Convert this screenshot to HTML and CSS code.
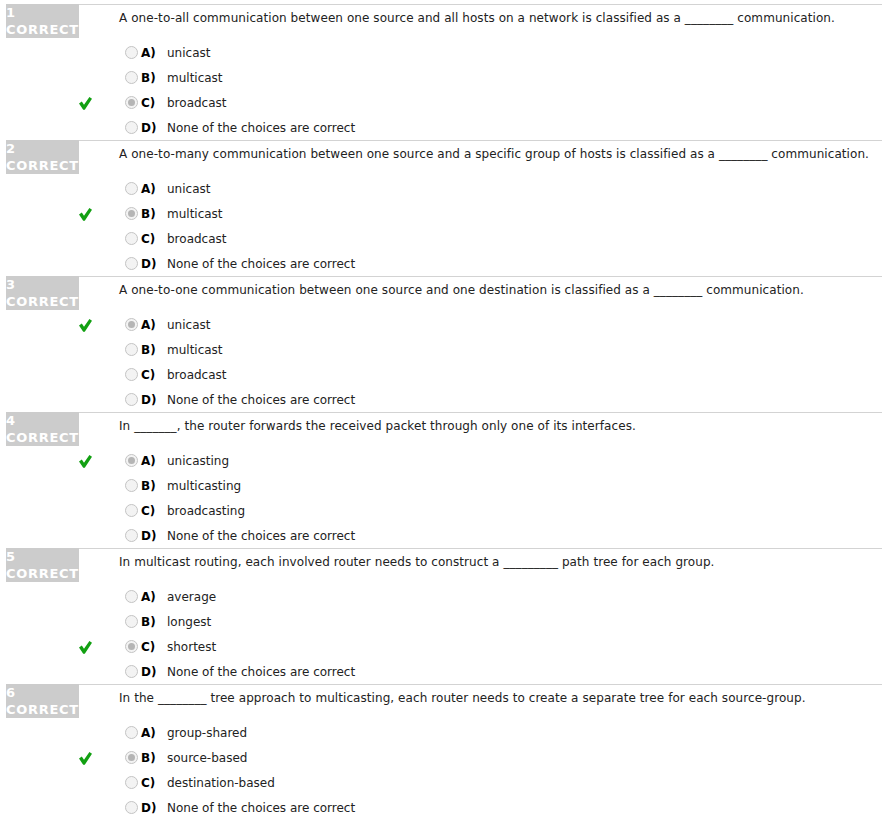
FILE: index.html
```html
<!DOCTYPE html>
<html>
<head>
<meta charset="utf-8">
<link rel="stylesheet" href="styles.css">
</head>
<body>
<div class="quiz">
  <div class="q">
    <div class="label">1<br>CORRECT</div>
    <div class="body">
      <div class="text">A one-to-all communication between one source and all hosts on a network is classified as a ________ communication.</div>
      <div class="opts">
        <div class="opt"><span class="mark"></span><span class="radio"></span><span class="let">A)</span><span class="ans">unicast</span></div>
        <div class="opt"><span class="mark"></span><span class="radio"></span><span class="let">B)</span><span class="ans">multicast</span></div>
        <div class="opt"><span class="mark"><svg viewBox="0 0 13 13" class="check"><path d="M0 6.6 L2.8 4.6 L5 7.8 L10.4 0 L13 1.8 L5.8 12.8 L4.2 12.8 Z"/></svg></span><span class="radio on"></span><span class="let">C)</span><span class="ans">broadcast</span></div>
        <div class="opt"><span class="mark"></span><span class="radio"></span><span class="let">D)</span><span class="ans">None of the choices are correct</span></div>
      </div>
    </div>
  </div>
  <div class="q">
    <div class="label">2<br>CORRECT</div>
    <div class="body">
      <div class="text">A one-to-many communication between one source and a specific group of hosts is classified as a ________ communication.</div>
      <div class="opts">
        <div class="opt"><span class="mark"></span><span class="radio"></span><span class="let">A)</span><span class="ans">unicast</span></div>
        <div class="opt"><span class="mark"><svg viewBox="0 0 13 13" class="check"><path d="M0 6.6 L2.8 4.6 L5 7.8 L10.4 0 L13 1.8 L5.8 12.8 L4.2 12.8 Z"/></svg></span><span class="radio on"></span><span class="let">B)</span><span class="ans">multicast</span></div>
        <div class="opt"><span class="mark"></span><span class="radio"></span><span class="let">C)</span><span class="ans">broadcast</span></div>
        <div class="opt"><span class="mark"></span><span class="radio"></span><span class="let">D)</span><span class="ans">None of the choices are correct</span></div>
      </div>
    </div>
  </div>
  <div class="q">
    <div class="label">3<br>CORRECT</div>
    <div class="body">
      <div class="text">A one-to-one communication between one source and one destination is classified as a ________ communication.</div>
      <div class="opts">
        <div class="opt"><span class="mark"><svg viewBox="0 0 13 13" class="check"><path d="M0 6.6 L2.8 4.6 L5 7.8 L10.4 0 L13 1.8 L5.8 12.8 L4.2 12.8 Z"/></svg></span><span class="radio on"></span><span class="let">A)</span><span class="ans">unicast</span></div>
        <div class="opt"><span class="mark"></span><span class="radio"></span><span class="let">B)</span><span class="ans">multicast</span></div>
        <div class="opt"><span class="mark"></span><span class="radio"></span><span class="let">C)</span><span class="ans">broadcast</span></div>
        <div class="opt"><span class="mark"></span><span class="radio"></span><span class="let">D)</span><span class="ans">None of the choices are correct</span></div>
      </div>
    </div>
  </div>
  <div class="q">
    <div class="label">4<br>CORRECT</div>
    <div class="body">
      <div class="text">In _______, the router forwards the received packet through only one of its interfaces.</div>
      <div class="opts">
        <div class="opt"><span class="mark"><svg viewBox="0 0 13 13" class="check"><path d="M0 6.6 L2.8 4.6 L5 7.8 L10.4 0 L13 1.8 L5.8 12.8 L4.2 12.8 Z"/></svg></span><span class="radio on"></span><span class="let">A)</span><span class="ans">unicasting</span></div>
        <div class="opt"><span class="mark"></span><span class="radio"></span><span class="let">B)</span><span class="ans">multicasting</span></div>
        <div class="opt"><span class="mark"></span><span class="radio"></span><span class="let">C)</span><span class="ans">broadcasting</span></div>
        <div class="opt"><span class="mark"></span><span class="radio"></span><span class="let">D)</span><span class="ans">None of the choices are correct</span></div>
      </div>
    </div>
  </div>
  <div class="q">
    <div class="label">5<br>CORRECT</div>
    <div class="body">
      <div class="text">In multicast routing, each involved router needs to construct a _________ path tree for each group.</div>
      <div class="opts">
        <div class="opt"><span class="mark"></span><span class="radio"></span><span class="let">A)</span><span class="ans">average</span></div>
        <div class="opt"><span class="mark"></span><span class="radio"></span><span class="let">B)</span><span class="ans">longest</span></div>
        <div class="opt"><span class="mark"><svg viewBox="0 0 13 13" class="check"><path d="M0 6.6 L2.8 4.6 L5 7.8 L10.4 0 L13 1.8 L5.8 12.8 L4.2 12.8 Z"/></svg></span><span class="radio on"></span><span class="let">C)</span><span class="ans">shortest</span></div>
        <div class="opt"><span class="mark"></span><span class="radio"></span><span class="let">D)</span><span class="ans">None of the choices are correct</span></div>
      </div>
    </div>
  </div>
  <div class="q">
    <div class="label">6<br>CORRECT</div>
    <div class="body">
      <div class="text">In the ________ tree approach to multicasting, each router needs to create a separate tree for each source-group.</div>
      <div class="opts">
        <div class="opt"><span class="mark"></span><span class="radio"></span><span class="let">A)</span><span class="ans">group-shared</span></div>
        <div class="opt"><span class="mark"><svg viewBox="0 0 13 13" class="check"><path d="M0 6.6 L2.8 4.6 L5 7.8 L10.4 0 L13 1.8 L5.8 12.8 L4.2 12.8 Z"/></svg></span><span class="radio on"></span><span class="let">B)</span><span class="ans">source-based</span></div>
        <div class="opt"><span class="mark"></span><span class="radio"></span><span class="let">C)</span><span class="ans">destination-based</span></div>
        <div class="opt"><span class="mark"></span><span class="radio"></span><span class="let">D)</span><span class="ans">None of the choices are correct</span></div>
      </div>
    </div>
  </div>
</div>
</body>
</html>
```

FILE: styles.css
```css
html, body {
  margin: 0;
  padding: 0;
  background: #fff;
}
body {
  font-family: "DejaVu Sans", Verdana, sans-serif;
  font-size: 12px;
  color: #222;
}
.quiz {
  padding: 4px 0 0 6px;
}
.q {
  display: flex;
  height: 136px;
}
.label {
  width: 73px;
  height: 34px;
  flex: none;
  background: #cccccc;
  color: #fff;
  font-weight: bold;
  font-size: 13px;
  line-height: 17px;
  padding-left: 0;
  box-sizing: border-box;
  letter-spacing: 0.7px;
  overflow: hidden;
  white-space: nowrap;
}
.body {
  flex: 1;
  border-top: 1px solid #d3d3d3;
}
.text {
  padding: 5px 0 0 40px;
  line-height: 16px;
  white-space: nowrap;
  letter-spacing: 0.07px;
}
.opts {
  margin-top: 14px;
}
.opt {
  display: flex;
  align-items: center;
  height: 25px;
}
.mark {
  width: 46px;
  flex: none;
  display: flex;
  align-items: center;
}
.check {
  width: 13px;
  height: 13px;
  margin-top: 1px;
  fill: #12a012;
}
.radio {
  width: 13px;
  height: 13px;
  box-sizing: border-box;
  border: 1px solid #c4c4c4;
  border-radius: 50%;
  background: #f3f3f3;
  flex: none;
  position: relative;
}
.radio.on::after {
  content: "";
  position: absolute;
  left: 2px;
  top: 2px;
  width: 7px;
  height: 7px;
  border-radius: 50%;
  background: #b5b5b5;
}
.let {
  width: 29px;
  flex: none;
  padding-left: 3px;
  box-sizing: border-box;
  font-weight: bold;
  color: #000;
}
.ans {
  color: #222;
}
```
